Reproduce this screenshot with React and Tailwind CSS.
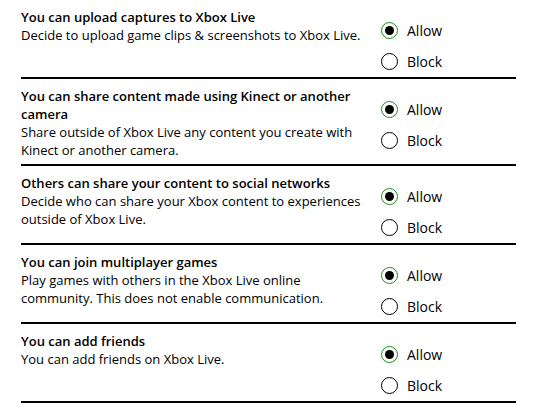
import React from 'react';

const rows = [
  {
    title: 'You can upload captures to Xbox Live',
    desc: 'Decide to upload game clips & screenshots to Xbox Live.',
  },
  {
    title: 'You can share content made using Kinect or another camera',
    desc: 'Share outside of Xbox Live any content you create with Kinect or another camera.',
  },
  {
    title: 'Others can share your content to social networks',
    desc: 'Decide who can share your Xbox content to experiences outside of Xbox Live.',
  },
  {
    title: 'You can join multiplayer games',
    desc: 'Play games with others in the Xbox Live online community. This does not enable communication.',
  },
  {
    title: 'You can add friends',
    desc: 'You can add friends on Xbox Live.',
  },
];

function Radio({ checked, label }) {
  return (
    <div className="flex h-[31px] items-center gap-[9px]">
      {checked ? (
        <span className="flex h-[17px] w-[17px] items-center justify-center rounded-full border-[1.5px] border-[#1e8a1e]">
          <span className="h-[9px] w-[9px] rounded-full bg-black" />
        </span>
      ) : (
        <span className="h-[17px] w-[17px] rounded-full border-[1.5px] border-black" />
      )}
      <span className="text-[14px] leading-[18px] text-black">{label}</span>
    </div>
  );
}

export default function App() {
  return (
    <div
      className="h-[411px] w-[533px] bg-white pl-[21px] pr-[17px]"
      style={{ fontFamily: '"Open Sans", "Noto Sans", sans-serif' }}
    >
      {rows.map((r, i) => (
        <div key={i} className="flex border-b-2 border-black pt-[8px]">
          <div className="w-[344px] pb-[5px] text-[13px] leading-[18px] text-black">
            <div className="font-semibold">{r.title}</div>
            <div>{r.desc}</div>
          </div>
          <div className="ml-[16px] pt-[7px]">
            <Radio checked label="Allow" />
            <Radio label="Block" />
          </div>
        </div>
      ))}
    </div>
  );
}
